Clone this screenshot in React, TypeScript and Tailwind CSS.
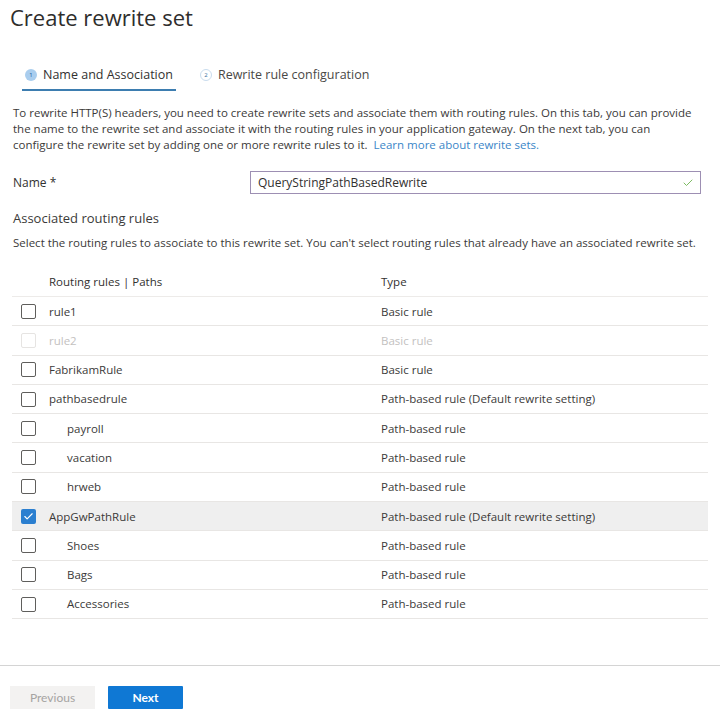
import { Check } from 'lucide-react'

type Rule = {
  name: string
  type: string
  child?: boolean
  disabled?: boolean
  checked?: boolean
}

const rules: Rule[] = [
  { name: 'rule1', type: 'Basic rule' },
  { name: 'rule2', type: 'Basic rule', disabled: true },
  { name: 'FabrikamRule', type: 'Basic rule' },
  { name: 'pathbasedrule', type: 'Path-based rule (Default rewrite setting)' },
  { name: 'payroll', type: 'Path-based rule', child: true },
  { name: 'vacation', type: 'Path-based rule', child: true },
  { name: 'hrweb', type: 'Path-based rule', child: true },
  { name: 'AppGwPathRule', type: 'Path-based rule (Default rewrite setting)', checked: true },
  { name: 'Shoes', type: 'Path-based rule', child: true },
  { name: 'Bags', type: 'Path-based rule', child: true },
  { name: 'Accessories', type: 'Path-based rule', child: true },
]

function Box({ checked, disabled }: { checked?: boolean; disabled?: boolean }) {
  if (checked) {
    return (
      <span className="flex items-center justify-center w-[15px] h-[15px] rounded-[2px] bg-[#2b7fd0]">
        <Check className="w-[11px] h-[11px] text-white" strokeWidth={2.5} />
      </span>
    )
  }
  return (
    <span
      className={`block w-[15px] h-[15px] rounded-[2px] border ${
        disabled ? 'border-[#e6e4e2]' : 'border-[#5f5e5c]'
      }`}
    />
  )
}

export default function App() {
  return (
    <div className="w-[720px] h-[717px] bg-white flex flex-col text-[#323130] font-['Segoe_UI','Open_Sans',sans-serif] overflow-hidden">
      <h1 className="pl-[10px] pt-[2px] text-[22px] leading-[30px] font-normal text-[#2e2d2c]">
        Create rewrite set
      </h1>

      {/* wizard steps */}
      <div className="flex mt-[32px] pl-[22px] gap-[24px] text-[12.5px]">
        <div className="flex flex-col">
          <div className="flex items-center gap-[6px] px-[3px] h-[22px]">
            <span className="flex items-center justify-center w-[12px] h-[12px] rounded-full bg-[#a9cdee] text-[6px] text-[#1c5a96]">1</span>
            <span>Name and Association</span>
          </div>
          <div className="h-[2px] mt-[3px] bg-[#3d7db0]" />
        </div>
        <div className="flex items-center gap-[6px] h-[22px] text-[#494846]">
          <span className="flex items-center justify-center w-[12px] h-[12px] rounded-full border border-[#c9dcee] text-[6px] text-[#3a6fa0]">2</span>
          <span>Rewrite rule configuration</span>
        </div>
      </div>

      <p className="mt-[14px] px-[13px] w-[710px] text-[11.5px] leading-[16px] text-[#3b3a39]">
        To rewrite HTTP(S) headers, you need to create rewrite sets and associate them with routing rules. On this tab, you can provide
        the name to the rewrite set and associate it with the routing rules in your application gateway. On the next tab, you can
        configure the rewrite set by adding one or more rewrite rules to it.&nbsp;&nbsp;
        <span className="text-[#3a86c8]">Learn more about rewrite sets.</span>
      </p>

      <div className="flex items-center mt-[18px] pl-[13px] pr-[19px]">
        <label className="w-[237px] text-[12px]">Name *</label>
        <div className="flex-1 flex items-center h-[23px] border border-[#9d8fb3] pl-[7px] pr-[6px] text-[12px]">
          <span className="flex-1">QueryStringPathBasedRewrite</span>
          <Check className="w-[12px] h-[12px] text-[#7dbb62]" strokeWidth={2} />
        </div>
      </div>

      <h2 className="mt-[14px] pl-[13px] text-[13px] leading-[20px] text-[#3b3a39]">Associated routing rules</h2>
      <p className="mt-[6px] pl-[13px] text-[11.5px] leading-[18px] text-[#3b3a39]">
        Select the routing rules to associate to this rewrite set. You can't select routing rules that already have an associated rewrite set.
      </p>

      <div className="mt-[15px] mx-[12px] text-[11.5px]">
        <div className="grid grid-cols-[37px_332px_1fr] items-center h-[30px] border-b border-[#edebe9] text-[#323130]">
          <span />
          <span>Routing rules | Paths</span>
          <span>Type</span>
        </div>
        {rules.map((r) => (
          <div
            key={r.name}
            className={`grid grid-cols-[37px_332px_1fr] items-center h-[29.3px] border-b border-[#e8e6e4] ${
              r.checked ? 'bg-[#efefef]' : ''
            } ${r.disabled ? 'text-[#c3c1bf]' : 'text-[#3b3a39]'}`}
          >
            <span className="pl-[9px]">
              <Box checked={r.checked} disabled={r.disabled} />
            </span>
            <span className={r.child ? 'pl-[18px]' : ''}>{r.name}</span>
            <span>{r.type}</span>
          </div>
        ))}
      </div>

      <div className="mt-auto border-t border-[#d4d4d4] h-[52px] flex items-start gap-[13px] pl-[10px] pt-[20px]">
        <button className="w-[85px] h-[23px] bg-[#f3f2f1] text-[#a6a4a2] text-[12px] font-['Lato',sans-serif]">
          Previous
        </button>
        <button className="w-[75px] h-[23px] bg-[#0f78d4] text-white text-[12px] font-bold font-['Lato',sans-serif] rounded-[1px]">
          Next
        </button>
      </div>
    </div>
  )
}
